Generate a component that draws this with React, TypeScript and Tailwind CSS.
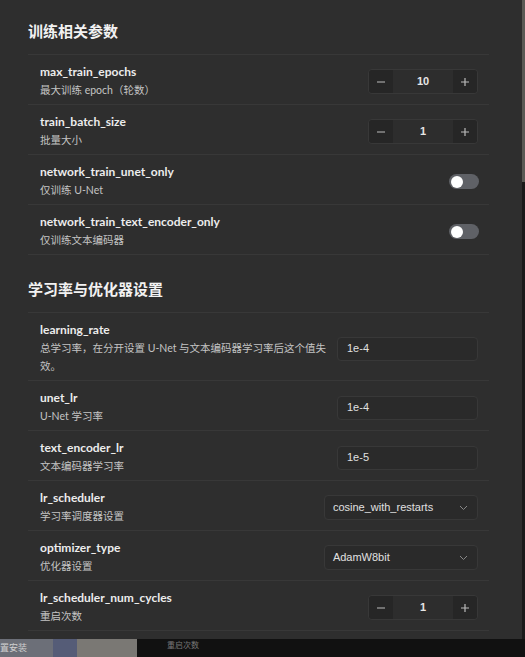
import React from 'react';

const font = { fontFamily: 'Lato, "Noto Sans CJK SC", sans-serif' };

function Stepper({ value }: { value: string }) {
	return (
		<div className="flex h-[25px] w-[110px] overflow-hidden rounded-[4px] border border-[#383838]">
			<div className="flex w-[24px] items-center justify-center bg-[#262626] text-[#bbb]">
				<svg width="10" height="10" viewBox="0 0 10 10">
					<path d="M1 5h8" stroke="currentColor" strokeWidth="1.2" />
				</svg>
			</div>
			<div
				className="flex flex-1 items-center justify-center bg-[#2d2d2d] text-[11px] font-bold text-[#e6e6e6]"
				style={{ fontFamily: '"Liberation Sans", sans-serif' }}
			>
				{value}
			</div>
			<div className="flex w-[24px] items-center justify-center bg-[#262626] text-[#bbb]">
				<svg width="10" height="10" viewBox="0 0 10 10">
					<path d="M1 5h8M5 1v8" stroke="currentColor" strokeWidth="1.2" />
				</svg>
			</div>
		</div>
	);
}

function Toggle() {
	return (
		<div className="mr-[-1px] flex h-[15px] w-[30px] items-center rounded-full bg-[#5f6166] px-[2px]">
			<div className="h-[12px] w-[12px] rounded-full bg-white" />
		</div>
	);
}

function TextInput({ value }: { value: string }) {
	return (
		<div
			className="flex h-[24px] w-[141px] items-center rounded-[4px] border border-[#383838] bg-[#2a2a2a] pl-[9px] text-[11px] text-[#e0e0e0]"
			style={{ fontFamily: '"Liberation Sans", sans-serif' }}
		>
			{value}
		</div>
	);
}

function Select({ value }: { value: string }) {
	return (
		<div
			className="flex h-[25px] w-[158px] items-center justify-between rounded-[4px] border border-[#383838] bg-[#2a2a2a] pl-[8px] pr-[9px] text-[11px] text-[#e0e0e0]"
			style={{ fontFamily: '"Liberation Sans", sans-serif' }}
		>
			<span>{value}</span>
			<svg width="9" height="6" viewBox="0 0 9 6" className="text-[#888]">
				<path d="M1 1l3.5 3.5L8 1" fill="none" stroke="currentColor" strokeWidth="1" />
			</svg>
		</div>
	);
}

type Row = { name: string; desc: string; control: React.ReactNode };

function SettingRow({ name, desc, control }: Row) {
	return (
		<div className="flex items-center justify-between border-b border-[#383838] pb-[5px] pl-[12px] pr-[11px] pt-[9px]">
			<div className="w-[292px]">
				<div className="text-[12px] font-bold leading-[16px] text-[#ececec]">{name}</div>
				<div className="mt-[1px] text-[10.5px] leading-[18px] text-[#c4c4c4]">{desc}</div>
			</div>
			{control}
		</div>
	);
}

function Section({ title, rows, first }: { title: string; rows: Row[]; first?: boolean }) {
	return (
		<div className={first ? 'pt-[20px]' : 'pt-[23px]'}>
			<h2 className="mb-[12px] text-[15px] font-bold leading-[22px] text-[#f2f2f2]">{title}</h2>
			<div className="border-t border-[#383838]">
				{rows.map((r) => (
					<SettingRow key={r.name} {...r} />
				))}
			</div>
		</div>
	);
}

export default function App() {
	const training: Row[] = [
		{ name: 'max_train_epochs', desc: '最大训练 epoch（轮数）', control: <Stepper value="10" /> },
		{ name: 'train_batch_size', desc: '批量大小', control: <Stepper value="1" /> },
		{ name: 'network_train_unet_only', desc: '仅训练 U-Net', control: <Toggle /> },
		{ name: 'network_train_text_encoder_only', desc: '仅训练文本编码器', control: <Toggle /> },
	];
	const optim: Row[] = [
		{
			name: 'learning_rate',
			desc: '总学习率，在分开设置 U-Net 与文本编码器学习率后这个值失效。',
			control: <TextInput value="1e-4" />,
		},
		{ name: 'unet_lr', desc: 'U-Net 学习率', control: <TextInput value="1e-4" /> },
		{ name: 'text_encoder_lr', desc: '文本编码器学习率', control: <TextInput value="1e-5" /> },
		{ name: 'lr_scheduler', desc: '学习率调度器设置', control: <Select value="cosine_with_restarts" /> },
		{ name: 'optimizer_type', desc: '优化器设置', control: <Select value="AdamW8bit" /> },
		{ name: 'lr_scheduler_num_cycles', desc: '重启次数', control: <Stepper value="1" /> },
	];

	return (
		<div className="flex h-[657px] w-[525px] flex-col overflow-hidden bg-[#141414]" style={font}>
			<div className="flex h-[639px]">
				<div className="h-full w-[522px] overflow-hidden bg-[#2e2e2e] pl-[28px] pr-[33px]">
					<Section title="训练相关参数" rows={training} first />
					<Section title="学习率与优化器设置" rows={optim} />
				</div>
				<div className="flex w-[3px] flex-col bg-[#1a1a1a]">
					<div className="h-[182px] bg-[#5a5a55]" />
				</div>
			</div>
			<div className="flex h-[18px] text-[9px] leading-[18px]">
				<div className="w-[53px] bg-[#6c6f78] text-[#d0d0d0]">置安装</div>
				<div className="w-[24px] bg-[#555c77]" />
				<div className="w-[60px] bg-[#7a7874]" />
				<div className="flex-1 bg-[#111111] pl-[30px] text-[8px] leading-[12px] text-[#777]">重启次数</div>
			</div>
		</div>
	);
}
